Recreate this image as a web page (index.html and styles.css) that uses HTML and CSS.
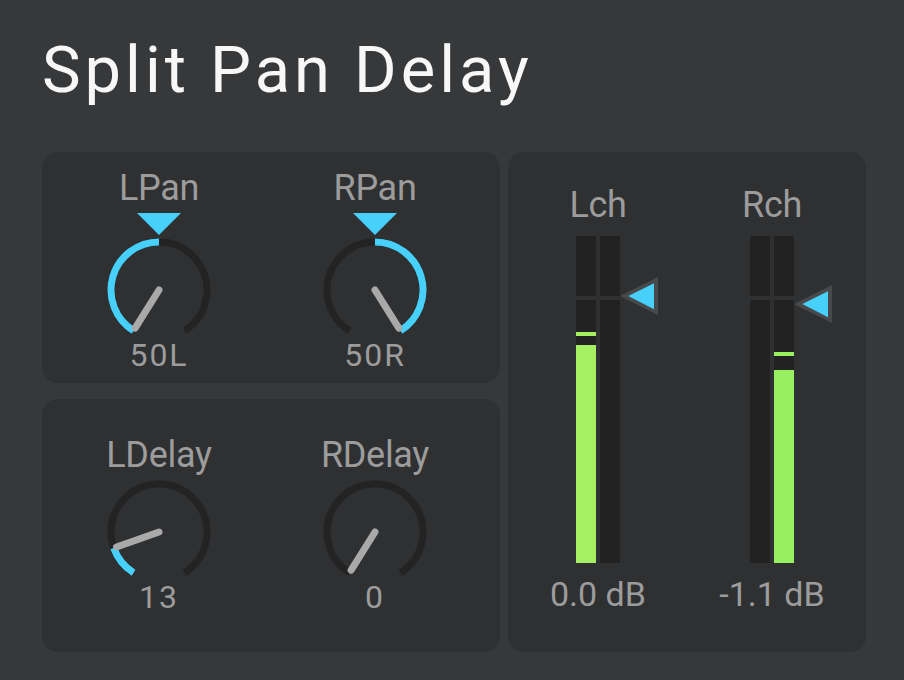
FILE: index.html
```html
<!DOCTYPE html>
<html lang="en">
<head>
    <meta charset="UTF-8">
    <title>Split Pan Delay</title>
    <link rel="stylesheet" href="styles.css">
</head>
<body>
    <div class="device">
        <h1 class="title">Split Pan Delay</h1>

        <div class="layout">
            <div class="left">
                <!-- pan -->
                <div class="panel knobs pan">
                    <div class="knob">
                        <div class="knob-label">LPan</div>
                        <svg class="center-mark" width="44" height="22" viewBox="0 0 44 22"><polygon points="0,0 44,0 22,22"/></svg>
                        <svg class="dial" width="110" height="104" viewBox="0 0 110 104">
                            <path class="track" d="M 29.56 95.71 A 48 48 0 1 1 80.44 95.71"/>
                            <path class="fill" d="M 55 7 A 48 48 0 0 0 29.56 95.71"/>
                            <line class="needle" x1="55" y1="55" x2="31.15" y2="93.16"/>
                        </svg>
                        <div class="knob-value">50L</div>
                    </div>
                    <div class="knob">
                        <div class="knob-label">RPan</div>
                        <svg class="center-mark" width="44" height="22" viewBox="0 0 44 22"><polygon points="0,0 44,0 22,22"/></svg>
                        <svg class="dial" width="110" height="104" viewBox="0 0 110 104">
                            <path class="track" d="M 29.56 95.71 A 48 48 0 1 1 80.44 95.71"/>
                            <path class="fill" d="M 55 7 A 48 48 0 0 1 80.44 95.71"/>
                            <line class="needle" x1="55" y1="55" x2="78.85" y2="93.16"/>
                        </svg>
                        <div class="knob-value">50R</div>
                    </div>
                </div>

                <!-- delay -->
                <div class="panel knobs delay">
                    <div class="knob">
                        <div class="knob-label">LDelay</div>
                        <svg class="dial" width="110" height="104" viewBox="0 0 110 104">
                            <path class="track" d="M 29.56 95.71 A 48 48 0 1 1 80.44 95.71"/>
                            <path class="fill" d="M 29.56 95.71 A 48 48 0 0 1 9.76 71.04"/>
                            <line class="needle" x1="55" y1="55" x2="12.59" y2="70.03"/>
                        </svg>
                        <div class="knob-value">13</div>
                    </div>
                    <div class="knob">
                        <div class="knob-label">RDelay</div>
                        <svg class="dial" width="110" height="104" viewBox="0 0 110 104">
                            <path class="track" d="M 29.56 95.71 A 48 48 0 1 1 80.44 95.71"/>
                            <line class="needle" x1="55" y1="55" x2="31.15" y2="93.16"/>
                        </svg>
                        <div class="knob-value">0</div>
                    </div>
                </div>
            </div>

            <!-- meters -->
            <div class="panel meters">
                <div class="channel">
                    <div class="channel-label">Lch</div>
                    <div class="meter">
                        <div class="bar">
                            <div class="seg top"></div>
                            <div class="seg bottom">
                                <div class="peak lch" style="bottom: 227px"></div>
                                <div class="level lch" style="height: 218px"></div>
                            </div>
                        </div>
                        <div class="bar">
                            <div class="seg top"></div>
                            <div class="seg bottom"></div>
                        </div>
                        <svg class="thumb" style="top: 41px" width="38" height="38" viewBox="0 0 38 38">
                            <polygon class="thumb-edge" points="0,19 38,0 38,38"/>
                            <polygon class="thumb-fill" points="8.3,19 34,6.3 34,32.3"/>
                        </svg>
                    </div>
                    <div class="channel-value">0.0 dB</div>
                </div>
                <div class="channel">
                    <div class="channel-label">Rch</div>
                    <div class="meter">
                        <div class="bar">
                            <div class="seg top"></div>
                            <div class="seg bottom"></div>
                        </div>
                        <div class="bar">
                            <div class="seg top"></div>
                            <div class="seg bottom">
                                <div class="peak rch" style="bottom: 207px"></div>
                                <div class="level rch" style="height: 193px"></div>
                            </div>
                        </div>
                        <svg class="thumb" style="top: 49px" width="38" height="38" viewBox="0 0 38 38">
                            <polygon class="thumb-edge" points="0,19 38,0 38,38"/>
                            <polygon class="thumb-fill" points="8.3,19 34,6.3 34,32.3"/>
                        </svg>
                    </div>
                    <div class="channel-value">-1.1 dB</div>
                </div>
            </div>
        </div>
    </div>
</body>
</html>
```

FILE: styles.css
```css
body {
    margin: 0;
    background-color: #37383a;
    font-family: Roboto, "Liberation Sans", sans-serif;
    color: #9c9c9c;
}
.device {
    padding: 38px 0 0 42px;
}
.title {
    margin: 0 0 49px 0;
    font-size: 65px;
    line-height: 65px;
    font-weight: 400;
    letter-spacing: 4px;
    color: #f7f7f7;
}
.layout {
    display: grid;
    grid-template-columns: 458px 358px;
    column-gap: 8px;
}
.left {
    display: grid;
    grid-template-rows: 231px 253px;
    row-gap: 16px;
}
.panel {
    background-color: #2f3032;
    border-radius: 16px;
}

/* knobs */
.knobs {
    display: grid;
    grid-template-columns: 216px 216px;
    padding-left: 9px;
}
.pan {
    padding-top: 18px;
}
.delay {
    padding-top: 38px;
}
.knob {
    display: flex;
    flex-direction: column;
    align-items: center;
}
.knob-label {
    font-size: 36px;
    line-height: 37px;
    letter-spacing: -0.3px;
    margin-bottom: 3px;
}
.center-mark {
    margin-top: 3px;
    display: block;
}
.center-mark polygon {
    fill: #47d0fa;
}
.dial {
    display: block;
}
.dial path {
    fill: none;
    stroke-width: 7;
}
.dial .track {
    stroke: #232324;
}
.dial .fill {
    stroke: #47d0fa;
}
.dial .needle {
    stroke: #a9a9a9;
    stroke-width: 7;
    stroke-linecap: round;
}
.knob-value {
    font-size: 32px;
    line-height: 32px;
    letter-spacing: 2px;
}

/* meters */
.meters {
    display: grid;
    grid-template-columns: 174px 174px;
    align-content: start;
    padding: 35px 0 0 3px;
}
.channel {
    display: flex;
    flex-direction: column;
    align-items: center;
}
.channel-label {
    font-size: 36px;
    line-height: 37px;
    letter-spacing: -0.3px;
}
.meter {
    position: relative;
    display: flex;
    gap: 4px;
    height: 327px;
    margin-top: 12px;
}
.bar {
    width: 20px;
    display: flex;
    flex-direction: column;
    gap: 4px;
}
.seg {
    background-color: #222223;
}
.seg.top {
    height: 60px;
}
.seg.bottom {
    flex: 1;
    position: relative;
}
.level, .peak {
    position: absolute;
    left: 0;
    right: 0;
}
.level {
    bottom: 0;
}
.peak {
    height: 4px;
}
.lch {
    background-color: #a4ef62;
}
.rch {
    background-color: #96f05f;
}
.thumb {
    position: absolute;
    left: 100%;
}
.thumb-edge {
    fill: #48494b;
}
.thumb-fill {
    fill: #47d0fa;
}
.channel-value {
    font-size: 34px;
    line-height: 34px;
    margin-top: 14px;
}
```
